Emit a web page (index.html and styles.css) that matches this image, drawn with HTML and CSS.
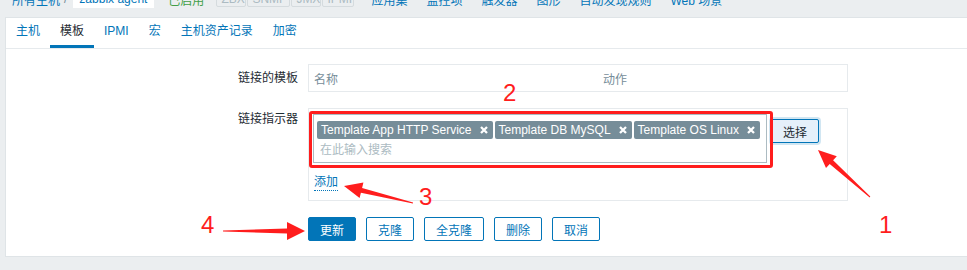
FILE: index.html
```html
<!DOCTYPE html>
<html lang="zh">
<head>
<meta charset="utf-8">
<link rel="stylesheet" href="styles.css">
</head>
<body>
<div class="topnav">
  <a class="crumb">所有主机</a><span class="sep">/</span><span class="crumb-cur">zabbix agent</span>
  <span class="status">已启用</span>
  <span class="badges"><span class="badge">ZBX</span><span class="badge">SNMP</span><span class="badge">JMX</span><span class="badge">IPMI</span></span>
  <nav class="links"><a>应用集</a><a>监控项</a><a>触发器</a><a>图形</a><a>自动发现规则</a><a>Web 场景</a></nav>
</div>
<div class="panel">
  <ul class="tabs">
    <li>主机</li><li class="active">模板</li><li>IPMI</li><li>宏</li><li>主机资产记录</li><li>加密</li>
  </ul>
  <div class="form">
    <div class="label l1">链接的模板</div>
    <div class="field">
      <div class="linked"><span class="c-name">名称</span><span class="c-act">动作</span></div>
    </div>
    <div class="label l2">链接指示器</div>
    <div class="field box">
      <div class="ms-row">
        <div class="ms">
          <div class="tags">
            <span class="tag">Template App HTTP Service<svg class="x" viewBox="0 0 8 8"><path d="M1 1L7 7M7 1L1 7"/></svg></span>
            <span class="tag">Template DB MySQL<svg class="x" viewBox="0 0 8 8"><path d="M1 1L7 7M7 1L1 7"/></svg></span>
            <span class="tag">Template OS Linux<svg class="x" viewBox="0 0 8 8"><path d="M1 1L7 7M7 1L1 7"/></svg></span>
          </div>
          <div class="ph">在此输入搜索</div>
        </div>
        <button class="btn-select">选择</button>
      </div>
      <div class="add-wrap"><a class="add">添加</a></div>
    </div>
    <div class="buttons">
      <button class="btn primary">更新</button>
      <button class="btn">克隆</button>
      <button class="btn">全克隆</button>
      <button class="btn">删除</button>
      <button class="btn">取消</button>
    </div>
  </div>
</div>

<div class="annot-rect"></div>
<span class="num n1">1</span>
<span class="num n2">2</span>
<span class="num n3">3</span>
<span class="num n4">4</span>
<svg class="arrows" width="967" height="270" viewBox="0 0 967 270">
  <polygon points="223,231.5 287,233.5 287,240 305,231 287,222 287,228.5 223,230.5"/>
  <polygon points="870.3,196.6 833.1,160.2 836.8,156.2 818,150 826,168 829.7,164 869.7,197.4"/>
  <polygon points="413.1,202.5 362.1,187.9 363.4,182.5 344,186 359.6,198.1 360.9,192.7 412.9,203.5"/>
</svg>
</body>
</html>
```
FILE: styles.css
```css
* { box-sizing: border-box; }
html, body { margin: 0; padding: 0; }
body {
  width: 967px;
  height: 270px;
  overflow: hidden;
  background: #ebeef0;
  font-family: "Liberation Sans", Arial, "Noto Sans CJK SC", sans-serif;
  font-size: 12px;
  color: #1f2c33;
  position: relative;
}
a { color: #0275b8; text-decoration: none; }

.topnav {
  height: 18px;
  margin-top: -10px;
  display: flex;
  align-items: center;
  padding-left: 12px;
  white-space: nowrap;
}
.crumb { color: #0275b8; }
.sep { margin: 0 6px 0 4px; color: #768d99; }
.crumb-cur {
  background: #fff;
  color: #0275b8;
  height: 18px;
  line-height: 18px;
  padding: 0 6px;
  width: 81px;
}
.status { color: #429e47; margin-left: 14px; }
.badges { display: flex; gap: 1px; margin-left: 12px; }
.badge {
  height: 16px;
  line-height: 14px;
  border: 1px solid #d5dbde;
  border-radius: 2px;
  padding: 0 4px;
  color: #acbbc2;
  background: #ebeef0;
}
.badge:nth-child(1) { width: 30px; }
.badge:nth-child(2) { width: 43px; }
.badge:nth-child(3) { width: 30px; }
.badge:nth-child(4) { width: 32px; }
.links { display: flex; margin-left: 17px; }
.links a { margin-right: 19px; }

.panel {
  margin: 9px -6px 0 5px;
  background: #fff;
  border: 1px solid #dfe4e7;
  height: 240px;
}
.tabs {
  list-style: none;
  margin: 0;
  padding: 0;
  display: flex;
  height: 31px;
  border-bottom: 1px solid #e6eaed;
}
.tabs li {
  padding: 0 10px;
  line-height: 27px;
  height: 30px;
  border-bottom: 3px solid transparent;
  color: #0275b8;
}
.tabs li.active {
  color: #1f2c33;
  border-bottom-color: #0275b8;
}

.form {
  display: grid;
  grid-template-columns: 292px 540px;
  column-gap: 10px;
  row-gap: 16px;
  padding-top: 15px;
}
.label { text-align: right; white-space: nowrap; }
.l1 { line-height: 28px; }
.l2 { line-height: 22px; }

.linked {
  height: 28px;
  border: 1px solid #e6eaed;
  display: flex;
  align-items: center;
  color: #768d99;
  padding-left: 5px;
}
.c-name { width: 289px; }

.box {
  border: 1px solid #e6eaed;
  height: 93px;
  padding: 5px 4px 0 4px;
}
.ms-row { display: flex; align-items: flex-start; }
.ms {
  width: 454px;
  height: 49px;
  border: 1px solid #acbbc2;
  padding: 6px 3px 0 3px;
}
.tags { display: flex; gap: 2px; }
.tag {
  display: inline-flex;
  align-items: center;
  height: 18px;
  line-height: 18px;
  background: #768d99;
  color: #fff;
  border-radius: 2px;
  padding: 0 5px 0 4px;
  white-space: nowrap;
}
.tag .x {
  width: 8px;
  height: 8px;
  margin-left: 8px;
  stroke: #fff;
  stroke-width: 2.3;
  fill: none;
}
.ph {
  margin-top: 2px;
  line-height: 18px;
  color: #acbbc2;
  padding-left: 3px;
}
.btn-select {
  margin: 5px 0 0 4px;
  width: 48px;
  height: 24px;
  border: 1px solid #0275b8;
  border-radius: 2px;
  background: #e5f0fa;
  color: #1f2c33;
  font: inherit;
  padding: 0;
  box-shadow: 0 0 0 2px rgba(2, 117, 184, 0.18);
}
.add-wrap { margin-top: 11px; padding-left: 1px; }
.add {
  display: inline-block;
  line-height: 16px;
  border-bottom: 1px dotted #0275b8;
}

.buttons {
  grid-column: 2;
  display: flex;
  gap: 10px;
}
.btn {
  height: 24px;
  padding: 0 11px;
  border: 1px solid #0275b8;
  border-radius: 2px;
  background: #fff;
  color: #0275b8;
  font: inherit;
}
.btn.primary { background: #0275b8; color: #fff; }

.annot-rect {
  position: absolute;
  left: 309px;
  top: 111px;
  width: 464px;
  height: 57px;
  border: 3px solid #ff1d1d;
  border-radius: 3px;
}
.num {
  position: absolute;
  font-family: "Liberation Sans", Arial, sans-serif;
  font-size: 24px;
  line-height: 24px;
  color: #ff1d1d;
}
.n1 { left: 879px; top: 213px; }
.n2 { left: 503px; top: 81px; }
.n3 { left: 419px; top: 185px; }
.n4 { left: 201px; top: 213px; }
.arrows {
  position: absolute;
  left: 0;
  top: 0;
  fill: #ff1d1d;
}
```
